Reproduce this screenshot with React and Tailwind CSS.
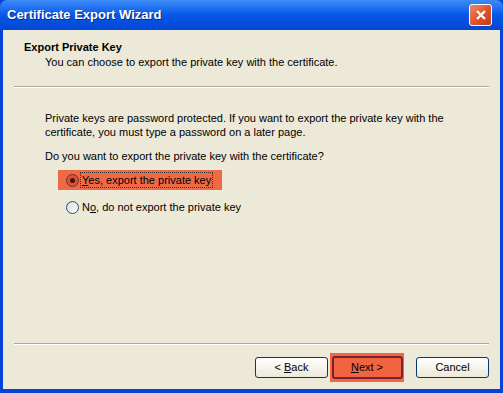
export default function App() {
  return (
    <div
      className="w-[503px] h-[393px] flex flex-col bg-[#0842d6] text-[11px] leading-[14px] text-black"
      style={{ fontFamily: '"Liberation Sans", Arial, sans-serif' }}
    >
      {/* title bar */}
      <div className="h-[30px] flex items-center justify-between pl-[7px] pr-[11px] rounded-t-[7px] bg-gradient-to-b from-[#3d8cf8] via-[#0656e8] to-[#0347d2]">
        <span className="text-white font-bold text-[13px] [text-shadow:1px_1px_0_#0a2a80]">
          Certificate Export Wizard
        </span>
        <button className="w-[23px] h-[22px] rounded-[3px] border border-white bg-gradient-to-br from-[#e88a6c] via-[#e0552f] to-[#c53a16] flex items-center justify-center">
          <svg width="12" height="12" viewBox="0 0 12 12">
            <path d="M2 2 L10 10 M10 2 L2 10" stroke="white" strokeWidth="2.2" />
          </svg>
        </button>
      </div>

      {/* client area */}
      <div className="flex-1 mx-[3px] mb-[4px] bg-[#ece9d8] flex flex-col">
        {/* header */}
        <div className="h-[56px] pt-[10px] pl-[21px]">
          <div className="font-bold">Export Private Key</div>
          <div className="pl-[21px] mt-[1px]">You can choose to export the private key with the certificate.</div>
        </div>
        <div className="mx-[11px] h-[2px] border-t border-[#aca899] border-b border-b-white" />

        {/* body */}
        <div className="flex-1 pl-[42px] pt-[23px]">
          <p>
            Private keys are password protected. If you want to export the private key with the
            <br />
            certificate, you must type a password on a later page.
          </p>
          <p className="mt-[10px]">Do you want to export the private key with the certificate?</p>

          <div className="mt-[7px] ml-[13px] w-[164px] h-[20px] bg-[#ee6a46] flex items-center pl-[8px]">
            <span className="w-[13px] h-[13px] rounded-full border border-[#6b2f2a] bg-[#e24f36] flex items-center justify-center">
              <span className="w-[5px] h-[5px] rounded-full bg-[#3a1a10]" />
            </span>
            <span className="ml-[2px] outline outline-1 outline-dotted outline-[#333] px-[1px]">
              <u>Y</u>es, export the private key
            </span>
          </div>

          <div className="mt-[10px] ml-[21px] h-[14px] flex items-center">
            <span className="w-[13px] h-[13px] rounded-full border border-[#1c5180] bg-gradient-to-br from-[#dcdcd4] to-white" />
            <span className="ml-[3px]">
              N<u>o</u>, do not export the private key
            </span>
          </div>
        </div>

        <div className="mx-[11px] h-[2px] border-t border-[#aca899] border-b border-b-white" />

        {/* buttons */}
        <div className="h-[44px] flex items-center justify-end pr-[11px]">
          <button className="w-[73px] h-[21px] rounded-[3px] border border-[#003c74] bg-gradient-to-b from-white to-[#ece9d8]">
            &lt; <u>B</u>ack
          </button>
          <div className="ml-[2px] w-[74px] h-[29px] bg-[#f0693d] flex items-center justify-center">
            <button className="w-[71px] h-[23px] rounded-[3px] border-2 border-[#7e1f3a] bg-[#f06440]">
              <u>N</u>ext &gt;
            </button>
          </div>
          <button className="ml-[12px] w-[73px] h-[21px] rounded-[3px] border border-[#003c74] bg-gradient-to-b from-white to-[#ece9d8]">
            Cancel
          </button>
        </div>
      </div>
    </div>
  );
}
